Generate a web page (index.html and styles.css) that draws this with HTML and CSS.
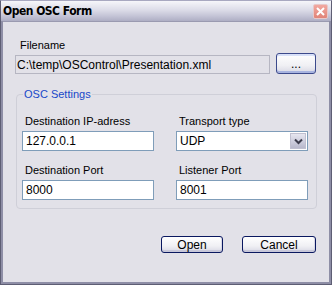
FILE: index.html
```html
<!DOCTYPE html>
<html lang="en">
<head>
  <meta charset="UTF-8" />
  <title>Open OSC Form</title>
  <link rel="stylesheet" href="styles.css">
</head>
<body>
  <div class="window">
    <div class="titlebar">
      <span class="title">Open OSC Form</span>
      <button class="close-btn" title="Close">
        <svg width="9" height="9" viewBox="0 0 9 9">
          <path d="M1 1 L8 8 M8 1 L1 8" stroke="#fff" stroke-width="2" />
        </svg>
      </button>
    </div>

    <div class="client">
      <div class="label">Filename</div>
      <div class="file-row">
        <div class="textbox readonly">C:\temp\OSControl\Presentation.xml</div>
        <button class="btn browse-btn">...</button>
      </div>

      <fieldset class="group">
        <legend>OSC Settings</legend>
        <div class="fields">
          <div class="field">
            <div class="label">Destination IP-adress</div>
            <div class="textbox">127.0.0.1</div>
          </div>
          <div class="field">
            <div class="label">Transport type</div>
            <div class="textbox combo">
              <span>UDP</span>
              <span class="drop-btn">
                <svg width="9" height="7" viewBox="0 0 9 7">
                  <path d="M1 1.5 L4.5 5 L8 1.5" fill="none" stroke="#3c3c4c" stroke-width="2" />
                </svg>
              </span>
            </div>
          </div>
          <div class="field">
            <div class="label">Destination Port</div>
            <div class="textbox">8000</div>
          </div>
          <div class="field">
            <div class="label">Listener Port</div>
            <div class="textbox">8001</div>
          </div>
        </div>
      </fieldset>

      <div class="actions">
        <button class="btn open-btn">Open</button>
        <button class="btn cancel-btn">Cancel</button>
      </div>
    </div>
  </div>
</body>
</html>
```

FILE: styles.css
```css
:root {
  --frame: #8e8ea6;
  --frame-dark: #5e5e74;
  --client: #e2e1e8;
  --legend: #1848c8;
  --text: #000;
}

body {
  margin: 0;
  font-family: 'Liberation Sans', Arial, sans-serif;
  font-size: 11px;
  color: var(--text);
}

.window {
  width: 332px;
  height: 285px;
  box-sizing: border-box;
  display: flex;
  flex-direction: column;
  background: var(--frame);
  border: 1px solid var(--frame-dark);
  border-top-color: #a8a8c0;
}

.titlebar {
  height: 20px;
  display: flex;
  justify-content: space-between;
  align-items: center;
  padding: 0 3px 0 2px;
  background: linear-gradient(#f6f6fa, #dcdce8 45%, #c4c4d6 75%, #aeaec4);
}

.title {
  font-family: 'DejaVu Sans Condensed', 'DejaVu Sans', sans-serif;
  font-weight: bold;
  font-size: 12px;
  letter-spacing: -0.5px;
}

.close-btn {
  width: 15px;
  height: 15px;
  padding: 0;
  border: 1px solid #e8c8c8;
  border-radius: 2px;
  background: linear-gradient(#f2a8a0, #e08478);
  display: flex;
  align-items: center;
  justify-content: center;
}

.client {
  flex: 1;
  margin: 0 2px 2px 2px;
  border-top: 1px solid #9a9ab0;
  background: var(--client);
  padding: 17px 13px 0 12px;
  display: flex;
  flex-direction: column;
}

.label {
  line-height: 13px;
  height: 15px;
  padding-left: 5px;
}

.file-row {
  display: flex;
  align-items: center;
  gap: 6px;
}

.textbox {
  height: 19px;
  box-sizing: border-box;
  border: 1px solid #7f9db9;
  background: #fff;
  padding: 2px 0 0 3px;
  line-height: 14px;
  font-size: 12px;
  white-space: nowrap;
}

.textbox.readonly {
  width: 255px;
  background: var(--client);
  border-color: #b6b6c2;
  padding-left: 1px;
}

.btn {
  font-family: 'Liberation Sans', Arial, sans-serif;
  font-size: 12px;
  border: 1px solid #0a1860;
  border-radius: 3px;
  background: linear-gradient(#ffffff, #f0f0f4 60%, #d8d8e4);
  box-shadow: inset 0 -2px 0 #c8c8da, inset -1px 0 0 #d8d8e6;
  padding: 0;
  color: #000;
}

.browse-btn {
  width: 40px;
  height: 21px;
  border-color: #3c4a8c;
  box-shadow: inset 0 -2px 0 #a8b4e0, inset 0 2px 0 #d8e0f8;
  margin-top: -1px;
}

.group {
  margin: 14px 0 0 1px;
  width: 301px;
  height: 121px;
  box-sizing: border-box;
  border: 1px solid #cfcfd8;
  border-radius: 4px;
  padding: 17px 0 0 5px;
}

.group legend {
  color: var(--legend);
  font-size: 11px;
  padding: 0 1px;
  margin-left: 1px;
}

.fields {
  display: grid;
  grid-template-columns: 132px 132px;
  column-gap: 22px;
  row-gap: 13px;
  margin-top: -2px;
}

.field .label {
  padding-left: 3px;
  height: 16px;
}

.field .textbox {
  height: 20px;
}

.combo {
  display: flex;
  justify-content: space-between;
  padding-right: 1px;
}

.drop-btn {
  width: 16px;
  height: 16px;
  margin-top: -1px;
  background: linear-gradient(#e6e6f0, #b8b8cc);
  border: 1px solid #c0c0d0;
  box-sizing: border-box;
  display: flex;
  align-items: center;
  justify-content: center;
}

.actions {
  display: flex;
  justify-content: flex-end;
  gap: 19px;
  margin-top: 27px;
}

.open-btn {
  width: 62px;
  height: 17px;
}

.cancel-btn {
  width: 74px;
  height: 17px;
}
```
